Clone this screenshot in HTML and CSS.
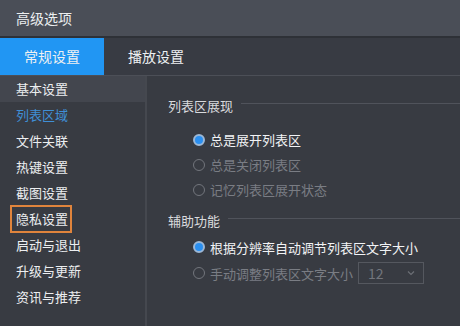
FILE: index.html
```html
<!DOCTYPE html>
<html>
<head>
<meta charset="utf-8">
<link rel="stylesheet" href="styles.css">
</head>
<body>
<div class="window">
  <div class="titlebar">高级选项</div>
  <div class="tabs">
    <div class="tab active">常规设置</div>
    <div class="tab">播放设置</div>
  </div>
  <div class="main">
    <div class="sidebar">
      <div class="item hover">基本设置</div>
      <div class="item selected">列表区域</div>
      <div class="item">文件关联</div>
      <div class="item">热键设置</div>
      <div class="item">截图设置</div>
      <div class="item"><span class="mark">隐私设置</span></div>
      <div class="item">启动与退出</div>
      <div class="item">升级与更新</div>
      <div class="item">资讯与推荐</div>
    </div>
    <div class="content">
      <div class="group-head"><span>列表区展现</span><i class="rule"></i></div>
      <div class="options first">
        <div class="opt"><span class="radio on"></span>总是展开列表区</div>
        <div class="opt disabled"><span class="radio"></span>总是关闭列表区</div>
        <div class="opt disabled"><span class="radio"></span>记忆列表区展开状态</div>
      </div>
      <div class="group-head second"><span>辅助功能</span><i class="rule"></i></div>
      <div class="options">
        <div class="opt tall"><span class="radio on"></span>根据分辨率自动调节列表区文字大小</div>
        <div class="opt tall disabled"><span class="radio"></span>手动调整列表区文字大小
          <div class="select"><span>12</span><svg width="8" height="6" viewBox="0 0 8 6"><path d="M1 1.5 L4 4.5 L7 1.5" fill="none" stroke="#6c6f76" stroke-width="1.2"/></svg></div>
        </div>
      </div>
    </div>
  </div>
</div>
</body>
</html>
```
FILE: styles.css
```css
html, body {
  margin: 0;
  padding: 0;
  background: #383b42;
}
body {
  font-family: "Noto Sans CJK SC", "Noto Sans", sans-serif;
  color: #eceef0;
}
.window {
  width: 460px;
  height: 326px;
  overflow: hidden;
  display: flex;
  flex-direction: column;
}
.titlebar {
  height: 36px;
  line-height: 36px;
  padding-left: 16px;
  font-size: 14px;
  background: #4a4e57;
  border-bottom: 2px solid #2e3137;
  flex: none;
}
.tabs {
  height: 37px;
  display: flex;
  background: #383b43;
  border-bottom: 1px solid #4c4f57;
  flex: none;
}
.tab {
  width: 104px;
  line-height: 37px;
  text-align: center;
  font-size: 14px;
  color: #eef0f2;
}
.tab.active {
  background: #2196f3;
}
.main {
  flex: 1;
  display: flex;
}
.sidebar {
  width: 145px;
  border-right: 2px solid #45484f;
  background: #383b42;
  flex: none;
}
.item {
  height: 26px;
  line-height: 26px;
  padding-left: 16px;
  font-size: 13px;
  color: #eceef0;
}
.item.hover {
  background: #43464e;
}
.item.selected {
  color: #3f8fd6;
}
.mark {
  display: inline-block;
  line-height: 20px;
  padding-left: 2px;
  margin-left: -2px;
  outline: 2px solid #e0843c;
  outline-offset: 2px;
}
.content {
  flex: 1;
  padding-top: 19px;
  padding-left: 21px;
  font-size: 13px;
}
.group-head {
  height: 20px;
  display: flex;
  align-items: center;
  color: #d8dadd;
}
.group-head.second {
  margin-top: 8px;
}
.rule {
  flex: 1;
  height: 1px;
  background: #50535b;
  margin-left: 8px;
  margin-top: -3px;
}
.options {
  padding-left: 25px;
  margin-top: 4px;
}
.options.first {
  margin-top: 12px;
}
.opt {
  height: 25px;
  display: flex;
  align-items: center;
  color: #f2f3f5;
}
.opt.tall {
  height: 26px;
}
.opt.disabled {
  color: #7a7d84;
}
.radio {
  width: 10px;
  height: 10px;
  border-radius: 50%;
  border: 1px solid #72757c;
  margin-right: 5px;
  flex: none;
  box-sizing: content-box;
}
.radio.on {
  background: #2a8ff0;
  border: 2px solid #9bb7d6;
  width: 8px;
  height: 8px;
}
.select {
  margin-left: 5px;
  width: 64px;
  height: 20px;
  border: 1px solid #55585f;
  display: flex;
  align-items: center;
  justify-content: space-between;
  padding: 0 8px 0 9px;
  box-sizing: border-box;
  width: 66px;
  height: 22px;
  color: #72757c;
  font-size: 14px;
}
```
